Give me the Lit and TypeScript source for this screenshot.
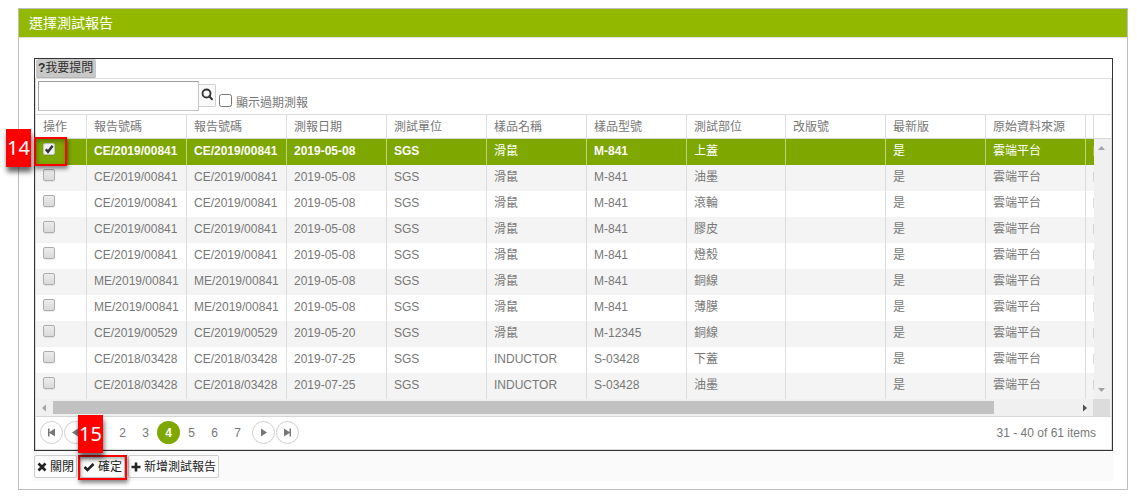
import { LitElement, html, svg, css } from "lit";
import { customElement, state } from "lit/decorators.js";
import { classMap } from "lit/directives/class-map.js";

interface Report {
  no: string;
  date: string;
  sample: string;
  model: string;
  part: string;
}

const HEADINGS = [
  { title: "操作", width: "w-action" },
  { title: "報告號碼", width: "w-data" },
  { title: "報告號碼", width: "w-data" },
  { title: "測報日期", width: "w-data" },
  { title: "測試單位", width: "w-data" },
  { title: "樣品名稱", width: "w-data" },
  { title: "樣品型號", width: "w-data" },
  { title: "測試部位", width: "w-part" },
  { title: "改版號", width: "w-data" },
  { title: "最新版", width: "w-data" },
  { title: "原始資料來源", width: "w-data" },
  { title: "", width: "w-rest" },
];

const REPORTS: Report[] = [
  { no: "CE/2019/00841", date: "2019-05-08", sample: "滑鼠", model: "M-841", part: "上蓋" },
  { no: "CE/2019/00841", date: "2019-05-08", sample: "滑鼠", model: "M-841", part: "油墨" },
  { no: "CE/2019/00841", date: "2019-05-08", sample: "滑鼠", model: "M-841", part: "滾輪" },
  { no: "CE/2019/00841", date: "2019-05-08", sample: "滑鼠", model: "M-841", part: "膠皮" },
  { no: "CE/2019/00841", date: "2019-05-08", sample: "滑鼠", model: "M-841", part: "燈殼" },
  { no: "ME/2019/00841", date: "2019-05-08", sample: "滑鼠", model: "M-841", part: "銅線" },
  { no: "ME/2019/00841", date: "2019-05-08", sample: "滑鼠", model: "M-841", part: "薄膜" },
  { no: "CE/2019/00529", date: "2019-05-20", sample: "滑鼠", model: "M-12345", part: "銅線" },
  { no: "CE/2018/03428", date: "2019-07-25", sample: "INDUCTOR", model: "S-03428", part: "下蓋" },
  { no: "CE/2018/03428", date: "2019-07-25", sample: "INDUCTOR", model: "S-03428", part: "油墨" },
];

const base = css`
  * {
    box-sizing: border-box;
  }
  button,
  input {
    font: inherit;
    margin: 0;
  }
  button {
    cursor: pointer;
  }
  svg {
    display: block;
  }
`;

@customElement("report-table")
export class ReportTable extends LitElement {
  @state() private selected = 0;

  static styles = [
    base,
    css`
      :host {
        display: block;
      }
      .area {
        display: flex;
      }
      .viewport {
        flex: 1;
        min-width: 0;
        overflow: hidden;
      }
      table {
        width: 1170px;
        table-layout: fixed;
        border-collapse: separate;
        border-spacing: 0;
      }
      .w-action {
        width: 51px;
      }
      .w-data {
        width: 100px;
      }
      .w-part {
        width: 99px;
      }
      .w-rest {
        width: 120px;
      }
      th,
      td {
        padding: 0 7px;
        text-align: left;
        font-weight: 400;
        white-space: nowrap;
        border-right: 1px solid #dcdcdc;
      }
      th {
        height: 24px;
        padding-top: 1px;
        line-height: 22px;
        border-bottom: 1px solid #d6d6d6;
      }
      td {
        height: 26px;
        line-height: 24px;
        padding-bottom: 2px;
      }
      tbody tr:nth-child(even) {
        background: #f4f4f4;
      }
      tbody tr.selected {
        background: #7ea700;
        color: #fff;
      }
      .selected td {
        border-right-color: #bdd285;
      }
      .selected .latin {
        font-weight: 700;
      }
      .stub::before {
        content: "";
        display: block;
        width: 1px;
        height: 10px;
        background: currentColor;
        opacity: 0.25;
      }
      .tick {
        appearance: none;
        display: block;
        width: 12px;
        height: 12px;
        margin-bottom: 4px;
        border: 1px solid #adadad;
        border-radius: 2px;
        background: linear-gradient(#ececec, #dadada);
        box-shadow: 0 1px 1px rgba(0, 0, 0, 0.08);
      }
      .tick:checked {
        border-color: #c4c4c4;
        background: #f0f0f4;
      }
      .check {
        display: grid;
      }
      .check > * {
        grid-area: 1 / 1;
      }
      .mark {
        width: 12px;
        height: 12px;
        pointer-events: none;
      }
      .side {
        width: 17px;
        display: flex;
        flex-direction: column;
      }
      .corner-head {
        height: 24px;
        margin-left: -1px;
        border-left: 1px solid #dcdcdc;
        border-bottom: 1px solid #d6d6d6;
      }
      .vbar {
        flex: 1;
        display: flex;
        flex-direction: column;
        justify-content: space-between;
        align-items: center;
        padding: 6px 2px 6px 0;
        background: #f0f0f0;
      }
      .hbar {
        display: flex;
        height: 17px;
        background: #f0f0f0;
      }
      .cap {
        width: 17px;
        display: grid;
        place-items: center;
      }
      .track {
        flex: 1;
        padding: 2px 0;
      }
      .thumb {
        width: 92%;
        height: 13px;
        background: #c1c1c1;
      }
      .corner {
        width: 17px;
        margin-right: 1px;
        background: #dcdcdc;
      }
    `,
  ];

  private row(r: Report, i: number) {
    const on = i === this.selected;
    return html`<tr class=${classMap({ selected: on })}>
      <td>
        <span class="check">
          <input
            class="tick"
            type="checkbox"
            aria-label=${r.no}
            .checked=${on}
            @change=${() => (this.selected = i)}
          />
          ${on
            ? html`<svg class="mark" viewBox="0 0 12 12">
                <path d="M2.800 6.200 5 8.800 9.600 2.800" fill="none" stroke="#333" stroke-width="2.400" />
              </svg>`
            : null}
        </span>
      </td>
      <td class="latin">${r.no}</td>
      <td class="latin">${r.no}</td>
      <td class="latin">${r.date}</td>
      <td class="latin">SGS</td>
      <td>${r.sample}</td>
      <td class="latin">${r.model}</td>
      <td>${r.part}</td>
      <td></td>
      <td>是</td>
      <td>雲端平台</td>
      <td class="stub"></td>
    </tr>`;
  }

  private arrow(points: string, fill: string) {
    return html`<svg width="8" height="8" viewBox="0 0 8 8">${svg`<polygon points=${points} fill=${fill} />`}</svg>`;
  }

  render() {
    return html`
      <div class="area">
        <div class="viewport">
          <table>
            <thead>
              <tr>
                ${HEADINGS.map((h) => html`<th class=${h.width} scope="col">${h.title}</th>`)}
              </tr>
            </thead>
            <tbody>
              ${REPORTS.map((r, i) => this.row(r, i))}
            </tbody>
          </table>
        </div>
        <div class="side" aria-hidden="true">
          <div class="corner-head"></div>
          <div class="vbar">${this.arrow("0,5 7,5 3.5,1", "#a3a3a3")} ${this.arrow("0,3 7,3 3.5,7", "#a3a3a3")}</div>
        </div>
      </div>
      <div class="hbar" aria-hidden="true">
        <div class="cap">${this.arrow("5,0.5 5,7.5 1,4", "#a3a3a3")}</div>
        <div class="track"><div class="thumb"></div></div>
        <div class="cap">${this.arrow("2,0.5 2,7.5 6,4", "#505050")}</div>
        <div class="corner"></div>
      </div>
    `;
  }
}

@customElement("page-bar")
export class PageBar extends LitElement {
  @state() private page = 4;

  static styles = [
    base,
    css`
      :host {
        display: flex;
        align-items: center;
        height: 33px;
        padding: 0 15px 1px 4px;
        border-top: 1px solid #d6d6d6;
      }
      .step,
      .num {
        padding: 0;
        border: 0;
        background: none;
        color: inherit;
        height: 23px;
        border-radius: 12px;
      }
      .step {
        display: grid;
        place-items: center;
        width: 23px;
        border: 1px solid #d0d0d0;
      }
      .steps {
        display: flex;
        gap: 1px;
      }
      .nums {
        display: flex;
        margin: 0 3px 0 24px;
      }
      .num {
        width: 23px;
      }
      .current {
        background: #7ea700;
        color: #fff;
        font-weight: 700;
      }
      .info {
        margin-left: auto;
      }
    `,
  ];

  private step(label: string, d: string, to: number) {
    return html`<button class="step" aria-label=${label} @click=${() => (this.page = to)}>
      <svg width="9" height="9" viewBox="0 0 9 9"><path d=${d} fill="#777" /></svg>
    </button>`;
  }

  render() {
    return html`
      <span class="steps">
        ${this.step("First", "M1 0.500h1.500v3.500L8 0.500v8L2.500 5V8.500H1z", 1)}
        ${this.step("Previous", "M7 0.500v8L1 4.500z", Math.max(1, this.page - 1))}
      </span>
      <span class="nums">
        ${[2, 3, 4, 5, 6, 7].map(
          (n) =>
            html`<button class=${classMap({ num: true, current: n === this.page })} @click=${() => (this.page = n)}>
              ${n}
            </button>`
        )}
      </span>
      <span class="steps">
        ${this.step("Next", "M2 0.500v8l6-4z", Math.min(7, this.page + 1))}
        ${this.step("Last", "M8 0.500H6.500v3.500L1 0.500v8L6.500 5V8.500H8z", 7)}
      </span>
      <span class="info">31 - 40 of 61 items</span>
    `;
  }
}

@customElement("app-root")
export class AppRoot extends LitElement {
  static styles = [
    base,
    css`
      :host {
        display: block;
        padding: 8px 9px 9px 18px;
        font: 12px/16px "Liberation Sans", "Noto Sans CJK TC", sans-serif;
        color: #787878;
      }
      .panel {
        border: 1px solid #bfbfbf;
        background: #fff;
      }
      h1 {
        margin: 0;
        padding: 0 10px;
        font-size: 14px;
        font-weight: 400;
        line-height: 28px;
        color: #fff;
        background: #92b900;
        border-bottom: 1px solid #dedede;
      }
      .content {
        padding: 20px 14px 8px 15px;
      }
      .box {
        position: relative;
        border: 1px solid #333;
      }
      .ask {
        display: block;
        height: 19px;
        margin-left: 1px;
        padding: 0 3px 0 2px;
        line-height: 17px;
        color: #2e2e2e;
        background: #c8c8c8;
        border: 0;
        border-bottom: 1px solid #b5b5b5;
        border-radius: 2px;
      }
      .grid {
        border: 1px solid #dcdcdc;
      }
      .search {
        display: flex;
        align-items: flex-start;
        height: 36px;
        padding: 2px;
        border-bottom: 1px solid #dcdcdc;
      }
      .query {
        width: 161px;
        height: 30px;
        padding: 0 4px;
        border: 1px solid #c6c6c6;
        border-top-color: #a0a0a0;
        border-left-color: #a0a0a0;
      }
      .find {
        display: grid;
        place-items: center;
        width: 17px;
        height: 23px;
        margin-top: 3px;
        padding: 0 0 2px;
        border: 1px solid #d0d0d0;
        border-left: 0;
        border-radius: 0 2px 2px 0;
        background: #fafafa;
      }
      .expired {
        display: flex;
        align-items: flex-start;
        gap: 4px;
        margin: 13px 0 0 3px;
        line-height: 18px;
      }
      .expired input {
        width: 13px;
        height: 13px;
      }
      .footer {
        display: flex;
        gap: 2px;
        padding: 4px 0 3px;
        background: #fafafa;
      }
      .action {
        display: flex;
        align-items: center;
        gap: 3px;
        height: 23px;
        padding: 0 2px;
        color: #222;
        background: #fcfcfc;
        border: 1px solid #ccc;
        border-radius: 2px;
      }
      .confirm {
        position: relative;
        margin: 0 1px;
      }
      .frame {
        position: absolute;
        border: 2px solid #f00;
        box-shadow: 1px 3px 4px rgba(0, 0, 0, 0.45), inset 1px 2px 4px rgba(0, 0, 0, 0.3);
        pointer-events: none;
      }
      .flag {
        position: absolute;
        width: 25px;
        height: 38px;
        font: 20px/38px "Noto Sans", sans-serif;
        text-align: center;
        color: #fff;
        background: #f00;
        box-shadow: 1px 5px 5px rgba(0, 0, 0, 0.6);
      }
      .frame-row {
        left: -1px;
        top: 78px;
        width: 33px;
        height: 29px;
      }
      .flag-row {
        left: -29px;
        top: 70px;
      }
      .frame-confirm {
        left: -2px;
        right: -2px;
        top: 0;
        height: 25px;
      }
      .flag-confirm {
        left: -2px;
        top: -40px;
      }
    `,
  ];

  render() {
    return html`
      <section class="panel">
        <h1>選擇測試報告</h1>
        <div class="content">
          <div class="box">
            <button class="ask"><b>?</b>我要提問</button>
            <div class="grid">
              <div class="search">
                <input class="query" type="text" aria-label="報告號碼" />
                <button class="find" aria-label="Search">
                  <svg width="13" height="13" viewBox="0 0 13 13">
                    <circle cx="5.500" cy="5.500" r="4" fill="none" stroke="#333" stroke-width="1.800" />
                    <path d="M8.300 8.300 11 11.200" stroke="#333" stroke-width="2" stroke-linecap="round" />
                  </svg>
                </button>
                <label class="expired"><input type="checkbox" />顯示過期測報</label>
              </div>
              <report-table></report-table>
              <page-bar></page-bar>
            </div>
            <span class="frame frame-row"></span>
            <span class="flag flag-row">14</span>
          </div>
          <div class="footer">
            <button class="action">
              <svg width="10" height="10" viewBox="0 0 10 10">
                <path d="M1.500 1.500 8.500 8.500M8.500 1.500 1.500 8.500" stroke="#222" stroke-width="2.600" />
              </svg>
              關閉
            </button>
            <div class="confirm">
              <button class="action">
                <svg width="12" height="10" viewBox="0 0 12 10">
                  <path d="M1.500 5 4.500 8 10.500 2" fill="none" stroke="#222" stroke-width="2.500" />
                </svg>
                確定
              </button>
              <span class="frame frame-confirm"></span>
              <span class="flag flag-confirm">15</span>
            </div>
            <button class="action">
              <svg width="10" height="10" viewBox="0 0 10 10">
                <path d="M5 0.500V9.500M0.500 5H9.500" stroke="#222" stroke-width="2.600" />
              </svg>
              新增測試報告
            </button>
          </div>
        </div>
      </section>
    `;
  }
}
